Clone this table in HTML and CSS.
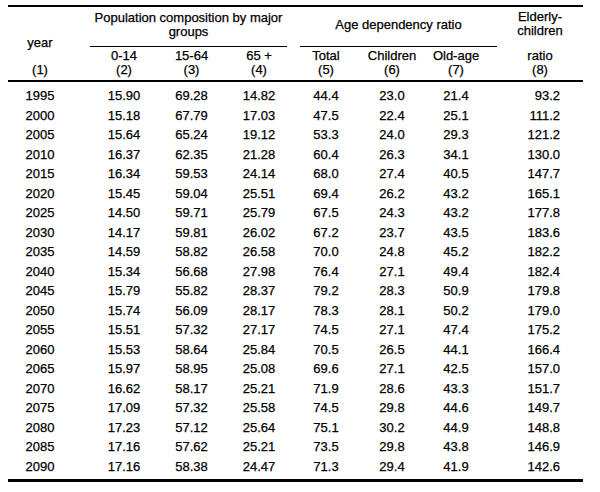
FILE: index.html
```html
<!DOCTYPE html>
<html>
<head>
<meta charset="utf-8">
<link rel="stylesheet" href="styles.css">
</head>
<body>
<div class="table">
  <div class="rule rule-top"></div>
  <div class="head">
    <div class="h-year"><span>year</span><span class="num2">(1)</span></div>
    <div class="h-group h-pop"><span class="gtext">Population composition by major<br>groups</span></div>
    <div class="h-group h-age"><span class="gtext">Age dependency ratio</span></div>
    <div class="h-eld"><span>Elderly-<br>children</span><span class="num1">ratio</span><span>(8)</span></div>
    <div class="h-sub c2">0-14<br>(2)</div>
    <div class="h-sub c3">15-64<br>(3)</div>
    <div class="h-sub c4">65 +<br>(4)</div>
    <div class="h-sub c5">Total<br>(5)</div>
    <div class="h-sub c6">Children<br>(6)</div>
    <div class="h-sub c7">Old-age<br>(7)</div>
  </div>
  <div class="rule rule-mid"></div>
  <div class="body" id="body"></div>
  <div class="rule rule-bottom"></div>
</div>
<script>
const rows = [
["1995","15.90","69.28","14.82","44.4","23.0","21.4","93.2"],
["2000","15.18","67.79","17.03","47.5","22.4","25.1","111.2"],
["2005","15.64","65.24","19.12","53.3","24.0","29.3","121.2"],
["2010","16.37","62.35","21.28","60.4","26.3","34.1","130.0"],
["2015","16.34","59.53","24.14","68.0","27.4","40.5","147.7"],
["2020","15.45","59.04","25.51","69.4","26.2","43.2","165.1"],
["2025","14.50","59.71","25.79","67.5","24.3","43.2","177.8"],
["2030","14.17","59.81","26.02","67.2","23.7","43.5","183.6"],
["2035","14.59","58.82","26.58","70.0","24.8","45.2","182.2"],
["2040","15.34","56.68","27.98","76.4","27.1","49.4","182.4"],
["2045","15.79","55.82","28.37","79.2","28.3","50.9","179.8"],
["2050","15.74","56.09","28.17","78.3","28.1","50.2","179.0"],
["2055","15.51","57.32","27.17","74.5","27.1","47.4","175.2"],
["2060","15.53","58.64","25.84","70.5","26.5","44.1","166.4"],
["2065","15.97","58.95","25.08","69.6","27.1","42.5","157.0"],
["2070","16.62","58.17","25.21","71.9","28.6","43.3","151.7"],
["2075","17.09","57.32","25.58","74.5","29.8","44.6","149.7"],
["2080","17.23","57.12","25.64","75.1","30.2","44.9","148.8"],
["2085","17.16","57.62","25.21","73.5","29.8","43.8","146.9"],
["2090","17.16","58.38","24.47","71.3","29.4","41.9","142.6"]
];
const body = document.getElementById('body');
rows.forEach(r => {
  r.forEach((v, i) => {
    const d = document.createElement('div');
    d.className = 'cell c' + (i + 1);
    d.textContent = v;
    body.appendChild(d);
  });
});
</script>
</body>
</html>
```

FILE: styles.css
```css
html, body {
  margin: 0;
  padding: 0;
  background: #fff;
}
body {
  font-family: "Liberation Sans", Arial, sans-serif;
  font-size: 13px;
  color: #000;
  -webkit-text-stroke: 0.25px #000;
}
.table {
  width: 575px;
  margin: 5px 0 0 8px;
}
.rule {
  background: #000;
}
.rule-top { height: 2px; }
.rule-mid { height: 2px; }
.rule-bottom { height: 3px; }

.head {
  display: grid;
  grid-template-columns: 82px 68px 67px 68px 66px 66px 72px 86px;
  grid-template-rows: 40px 33px;
  line-height: 14px;
  text-align: center;
}
.h-year {
  grid-column: 1;
  grid-row: 1 / 3;
  display: flex;
  flex-direction: column;
  align-items: center;
  padding: 29px 18px 0 0;
}
.h-year .num2 { margin-top: 13px; }
.h-group {
  grid-row: 1;
  border-bottom: 1.5px solid #000;
}
.h-pop {
  grid-column: 2 / 5;
  margin-right: 6px;
  padding-top: 4px;
}
.h-age {
  grid-column: 5 / 8;
  margin-left: 7px;
  padding-top: 11px;
}
.h-eld {
  grid-column: 8;
  grid-row: 1 / 3;
  display: flex;
  flex-direction: column;
  align-items: center;
  padding-top: 3px;
}
.h-eld .num1 { margin-top: 11px; }
.h-sub {
  grid-row: 2;
  padding-top: 2px;
}
.h-sub.c7 { padding-right: 10px; }

.body {
  display: grid;
  grid-template-columns: 82px 68px 67px 68px 66px 66px 72px 86px;
  grid-auto-rows: 19.5px;
  align-items: center;
  padding: 4px 0 3px;
  text-align: center;
}
.cell {
  line-height: 19.5px;
}
.cell.c1 { padding-right: 18px; }
.cell.c7 { padding-right: 10px; }
.cell.c8 { text-align: right; padding-right: 23px; }
```
